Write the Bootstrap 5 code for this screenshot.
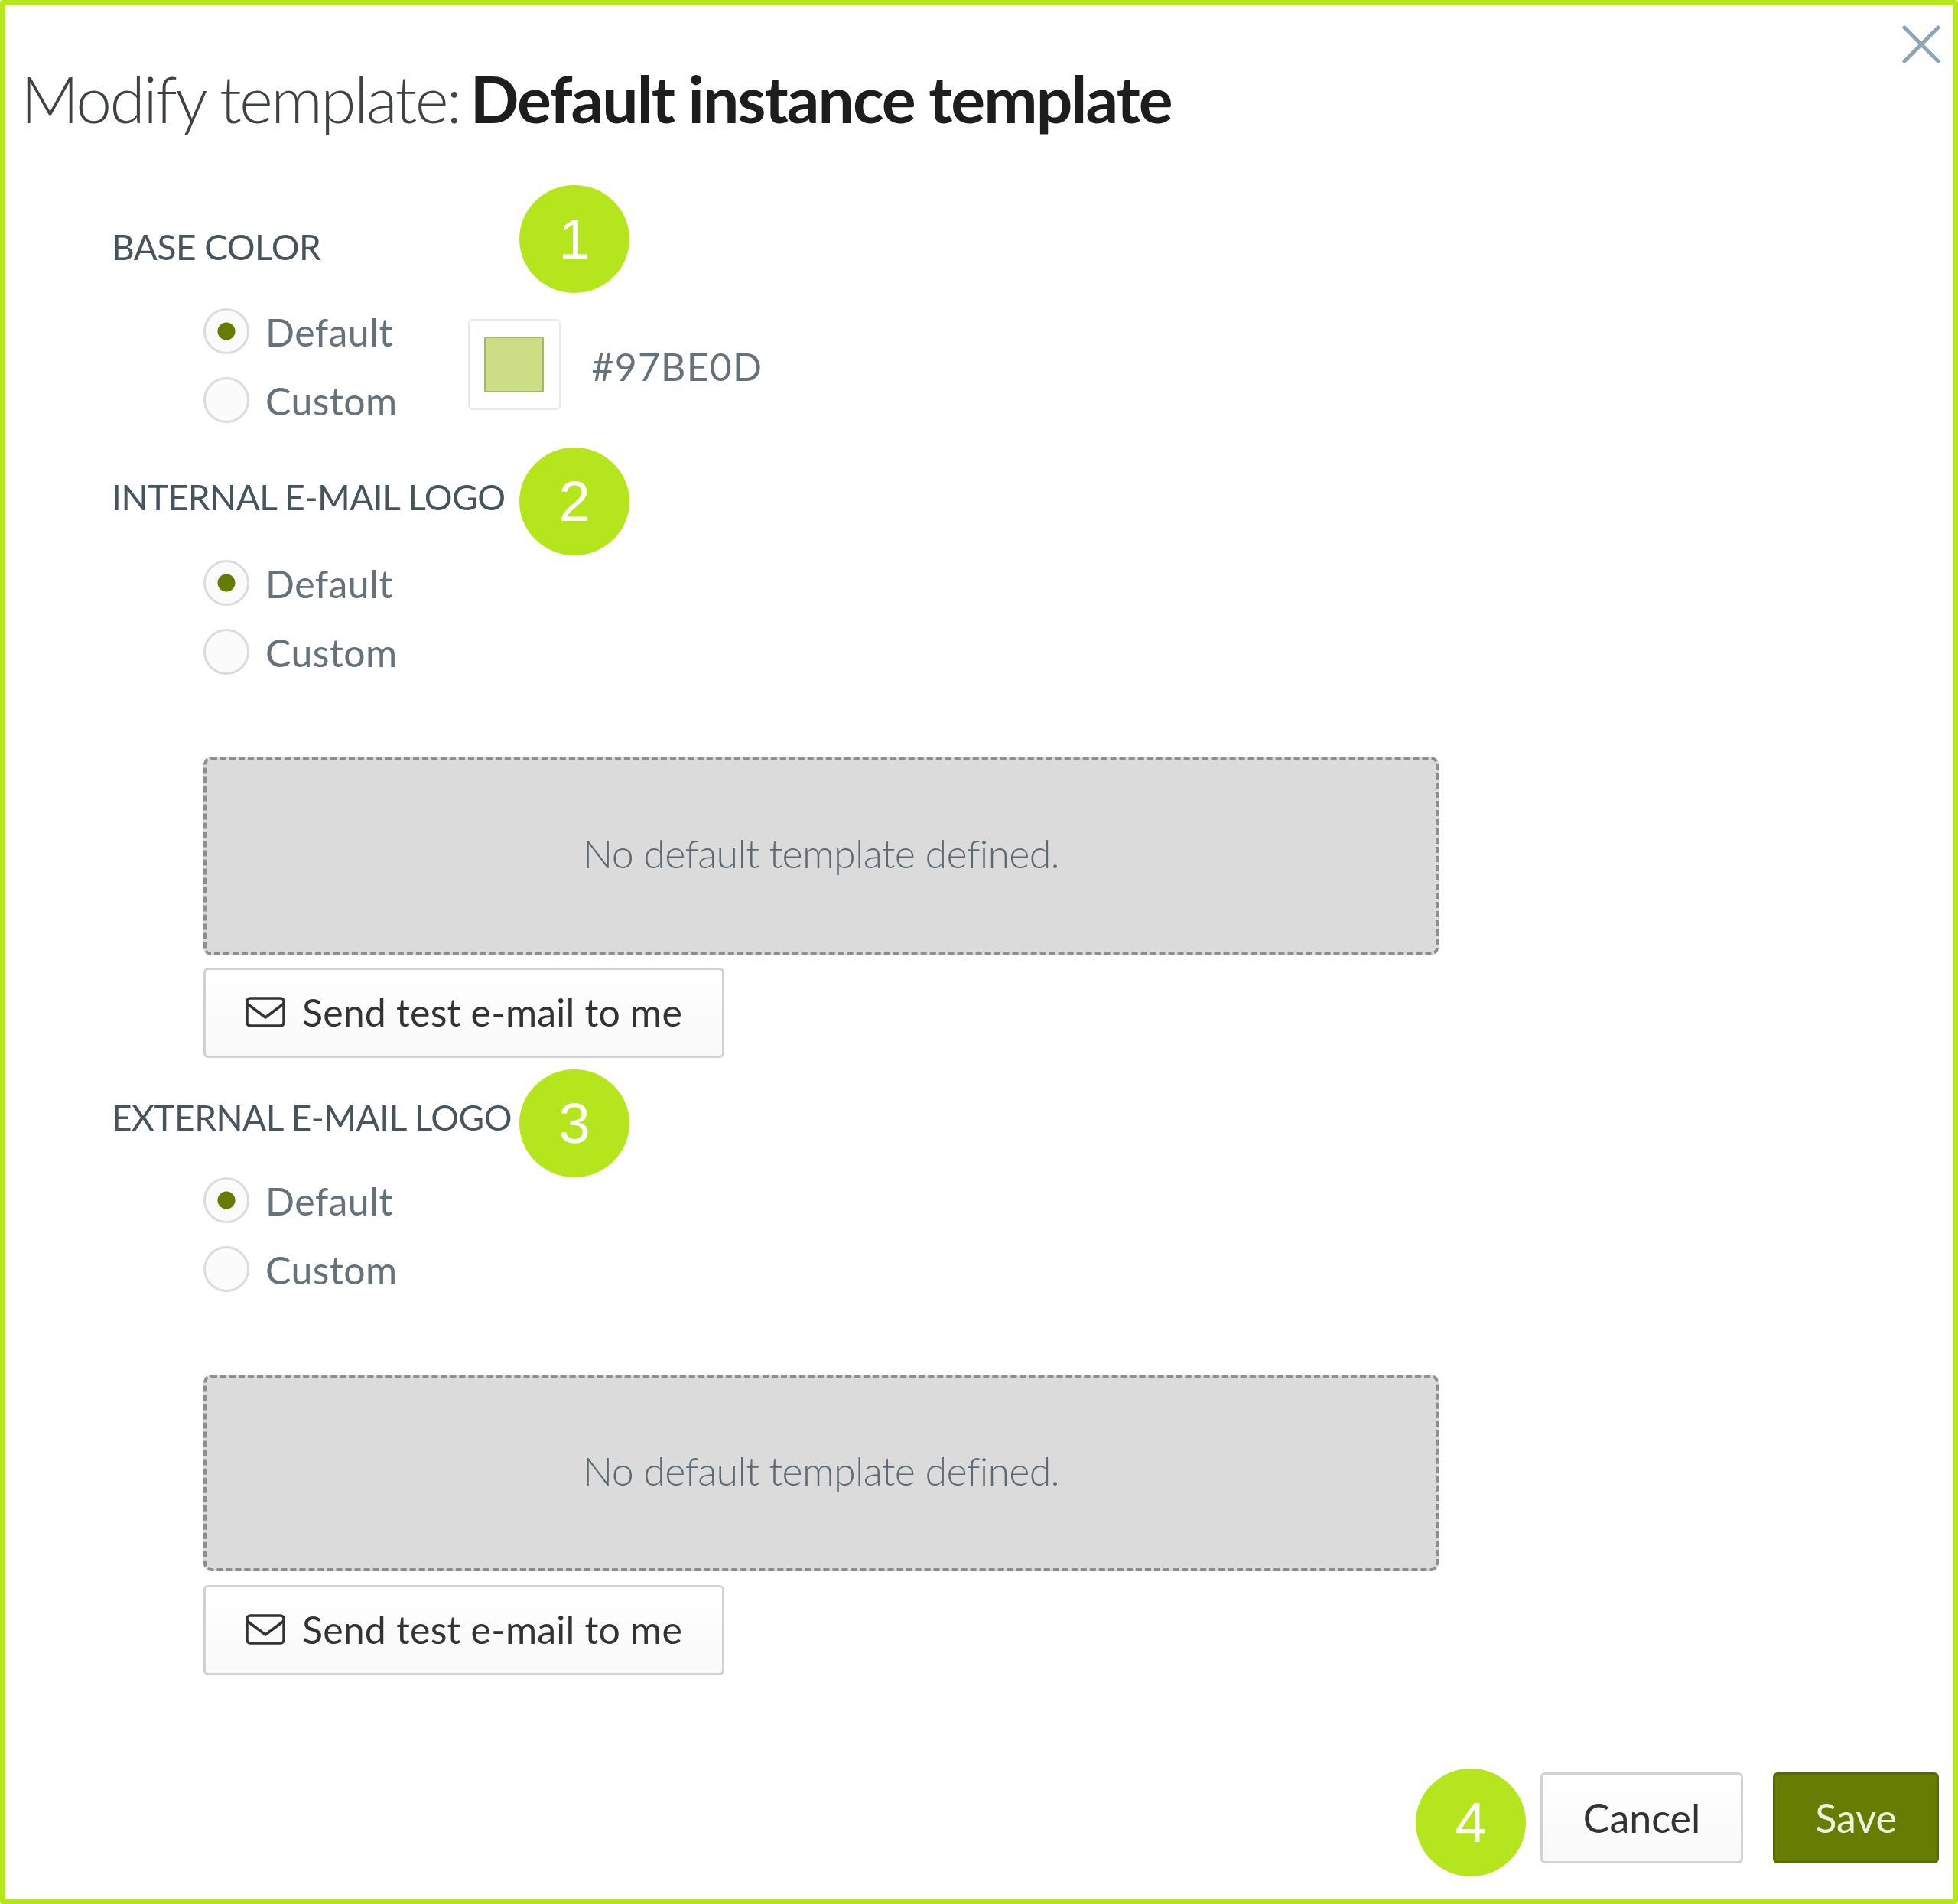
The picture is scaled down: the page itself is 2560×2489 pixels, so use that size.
<!DOCTYPE html>
<html lang="en">
<head>
<meta charset="utf-8">
<title>Modify template</title>
<link href="https://cdn.jsdelivr.net/npm/bootstrap@5.3.0/dist/css/bootstrap.min.css" rel="stylesheet">
<style>
html,body{margin:0;background:#fff}
body{font-family:"Lato","Liberation Sans",sans-serif}
.dlg{position:relative;width:2560px;height:2489px;border:7px solid #b5e61d;border-radius:4px;background:#fff;padding:0 18px 0 23px;color:#56626a}
.dlg-title{font-family:"Lato",sans-serif;font-size:84px;line-height:100px;font-weight:300;color:#3f4244;letter-spacing:-2.6px;margin:0 0 0 -3px;padding-top:72px;filter:blur(.6px)}
.dlg-title b{font-weight:700;color:#1d1d1d;letter-spacing:-1.9px;margin-left:-7px}
.x-btn{position:absolute;top:26px;right:16px;width:50px;height:50px;padding:0;background:none;border:0;filter:blur(.6px)}
.sec-head{font-size:46px;line-height:60px;color:#47545b;margin-left:116px;letter-spacing:-.5px;font-weight:400;filter:blur(.6px)}
.h1-top{margin-top:114px}.h2-top{margin-top:52px}.h3-top{margin-top:48px}
.radio-group{margin-left:236px}
.rg1{margin-top:35px}.rg2{margin-top:37px}.rg3{margin-top:33px}
.radio-row{height:90px;margin:0;padding:0;gap:21px;font-size:50px;font-weight:400;color:#66727a}
.radio-row .form-check-input{width:60px;height:60px;margin:0;float:none;background-color:#fbfbfb;border:3px solid #dcdcdc;flex:none;filter:blur(.5px)}
.radio-row .form-check-input:checked{background-color:#fbfbfb;border-color:#dcdcdc;background-image:radial-gradient(circle,#667d03 0 11px,transparent 12px)}
.radio-row .form-check-label{letter-spacing:.45px;opacity:1;padding-top:3px;filter:blur(.6px)}
.swatch-wrap{margin-left:92px;margin-top:32px;gap:39px}
.swatch-box{width:121px;height:119px;border:2px solid #e8e8e8;border-radius:6px;background:#fff;filter:blur(.5px)}
.swatch-fill{width:78px;height:73px;background:#cbdd85;border:2px solid #a3b866;border-radius:3px}
.hex-text{font-size:50px;color:#66727a;letter-spacing:1.2px;padding-top:6px;padding-left:2px;filter:blur(.6px)}
.drop-box{margin-left:236px;width:1615px;height:260px;background:#dbdbdb;border:4px dashed #8c8f91;border-radius:10px;padding-bottom:8px;font-size:52px;font-weight:300;color:#5e6a72;letter-spacing:-.75px;filter:blur(.5px)}
.drop1{margin-top:92px}.drop3{margin-top:93px;height:257px}
.mail-btn{margin-left:236px;width:681px;height:118px;gap:22px;font-size:50px;line-height:1;color:#333;background:linear-gradient(#fff,#f9f9f9);border:3px solid #d2d2d2;border-radius:6px;padding:0 0 2px;letter-spacing:.2px;filter:blur(.5px)}
.mt-a{margin-top:16px}.mt-b{margin-top:18px}
.foot-bar{margin-top:127px;gap:39px}
.act-btn{height:119px;font-size:52px;line-height:1;border-radius:6px;padding:0 0 2px;filter:blur(.5px)}
.act-cancel{width:265px;color:#333;background:linear-gradient(#fff,#f9f9f9);border:3px solid #d2d2d2}
.act-save{width:217px;color:#eef2dc;background:#667d03;border:3px solid #566a02}
.note-dot{position:absolute;width:144px;height:141px;border-radius:50%;background:#b5e61d;color:#fff;font-family:"Liberation Sans",sans-serif;font-size:74px;line-height:1}
.nd1{left:672px;top:235px}.nd2{left:672px;top:578px}.nd3{left:672px;top:1391px}.nd4{left:1844px;top:2305px}
</style>
</head>
<body>
<div class="dlg">
  <button class="x-btn" type="button" aria-label="Close">
    <svg width="50" height="50" viewBox="0 0 50 50" fill="none" stroke="#8fa6b2" stroke-width="5" stroke-linecap="round"><path d="M3 3 47 47M47 3 3 47"/></svg>
  </button>
  <h1 class="dlg-title">Modify template: <b>Default instance template</b></h1>

  <div class="sec-head h1-top">BASE COLOR</div>
  <div class="d-flex">
    <div class="radio-group rg1">
      <div class="form-check radio-row d-flex align-items-center"><input class="form-check-input" type="radio" name="a" id="a1" checked><label class="form-check-label" for="a1">Default</label></div>
      <div class="form-check radio-row d-flex align-items-center"><input class="form-check-input" type="radio" name="a" id="a2"><label class="form-check-label" for="a2">Custom</label></div>
    </div>
    <div class="swatch-wrap d-flex align-items-center">
      <div class="swatch-box d-flex align-items-center justify-content-center"><div class="swatch-fill"></div></div>
      <span class="hex-text">#97BE0D</span>
    </div>
  </div>

  <div class="sec-head h2-top">INTERNAL E-MAIL LOGO</div>
  <div class="radio-group rg2">
    <div class="form-check radio-row d-flex align-items-center"><input class="form-check-input" type="radio" name="b" id="b1" checked><label class="form-check-label" for="b1">Default</label></div>
    <div class="form-check radio-row d-flex align-items-center"><input class="form-check-input" type="radio" name="b" id="b2"><label class="form-check-label" for="b2">Custom</label></div>
  </div>
  <div class="drop-box drop1 d-flex align-items-center justify-content-center">No default template defined.</div>
  <button class="btn mail-btn mt-a d-flex align-items-center justify-content-center" type="button">
    <svg width="52" height="40" viewBox="0 0 52 40" fill="none" stroke="#333" stroke-width="3.5" stroke-linejoin="round"><rect x="2" y="2" width="48" height="36" rx="4"/><path d="M2 9 26 27 50 9"/></svg>
    Send test e-mail to me
  </button>

  <div class="sec-head h3-top">EXTERNAL E-MAIL LOGO</div>
  <div class="radio-group rg3">
    <div class="form-check radio-row d-flex align-items-center"><input class="form-check-input" type="radio" name="c" id="c1" checked><label class="form-check-label" for="c1">Default</label></div>
    <div class="form-check radio-row d-flex align-items-center"><input class="form-check-input" type="radio" name="c" id="c2"><label class="form-check-label" for="c2">Custom</label></div>
  </div>
  <div class="drop-box drop3 d-flex align-items-center justify-content-center">No default template defined.</div>
  <button class="btn mail-btn mt-b d-flex align-items-center justify-content-center" type="button">
    <svg width="52" height="40" viewBox="0 0 52 40" fill="none" stroke="#333" stroke-width="3.5" stroke-linejoin="round"><rect x="2" y="2" width="48" height="36" rx="4"/><path d="M2 9 26 27 50 9"/></svg>
    Send test e-mail to me
  </button>

  <div class="foot-bar d-flex justify-content-end">
    <button class="btn act-btn act-cancel" type="button">Cancel</button>
    <button class="btn act-btn act-save" type="button">Save</button>
  </div>

  <div class="note-dot nd1 d-flex align-items-center justify-content-center">1</div>
  <div class="note-dot nd2 d-flex align-items-center justify-content-center">2</div>
  <div class="note-dot nd3 d-flex align-items-center justify-content-center">3</div>
  <div class="note-dot nd4 d-flex align-items-center justify-content-center">4</div>
</div>
<script src="https://cdn.jsdelivr.net/npm/bootstrap@5.3.0/dist/js/bootstrap.bundle.min.js"></script>
</body>
</html>
